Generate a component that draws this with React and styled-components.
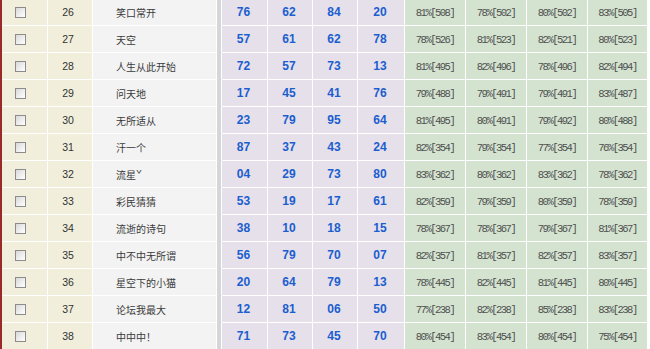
import React from "react";
import styled, { createGlobalStyle } from "styled-components";

const GlobalStyle = createGlobalStyle`
  html, body {
    margin: 0;
    padding: 0;
    background: #ffffff;
    overflow: hidden;
  }
`;

const rows = [
  [26, "笑口常开", ["76", "62", "84", "20"], ["81%[508]", "78%[502]", "80%[502]", "83%[505]"]],
  [27, "天空", ["57", "61", "62", "78"], ["78%[526]", "81%[523]", "82%[521]", "80%[523]"]],
  [28, "人生从此开始", ["72", "57", "73", "13"], ["81%[495]", "82%[496]", "78%[496]", "82%[494]"]],
  [29, "问天地", ["17", "45", "41", "76"], ["79%[488]", "79%[491]", "79%[491]", "83%[487]"]],
  [30, "无所适从", ["23", "79", "95", "64"], ["81%[495]", "80%[491]", "79%[492]", "80%[488]"]],
  [31, "汗一个", ["87", "37", "43", "24"], ["82%[354]", "79%[354]", "77%[354]", "76%[354]"]],
  [32, "流星ˇ", ["04", "29", "73", "80"], ["83%[362]", "80%[362]", "83%[362]", "78%[362]"]],
  [33, "彩民猜猜", ["53", "19", "17", "61"], ["82%[359]", "79%[359]", "80%[359]", "78%[359]"]],
  [34, "流逝的诗句", ["38", "10", "18", "15"], ["78%[367]", "78%[367]", "79%[367]", "81%[367]"]],
  [35, "中不中无所谓", ["56", "79", "70", "07"], ["82%[357]", "81%[357]", "82%[357]", "83%[357]"]],
  [36, "星空下的小猫", ["20", "64", "79", "13"], ["78%[445]", "82%[445]", "81%[445]", "80%[445]"]],
  [37, "论坛我最大", ["12", "81", "06", "50"], ["77%[238]", "82%[238]", "85%[238]", "83%[238]"]],
  [38, "中中中！", ["71", "73", "45", "70"], ["80%[454]", "83%[454]", "80%[454]", "75%[454]"]],
];

const Board = styled.div`
  width: 650px;
  height: 349px;
  overflow: hidden;
  box-sizing: border-box;
  border-left: 2px solid #9a2a2a;
`;

const Rows = styled.div`
  margin-top: -1px;
`;

const Row = styled.div`
  display: grid;
  grid-template-columns: 46px 45px 124px 5px 46px 45px 45px 47px 61px 61px 61px 60px;
  height: 27px;
`;

const Cell = styled.div`
  box-sizing: border-box;
  border-right: 1px solid #ffffff;
  border-bottom: 1px solid #ffffff;
  display: flex;
  align-items: center;
  justify-content: ${(p) => p.$align || "center"};
  background: ${(p) => p.$bg};
  white-space: nowrap;
`;

const CheckCell = styled(Cell)`
  padding-left: 13px;
`;

const Check = styled.input.attrs({ type: "checkbox" })`
  appearance: none;
  margin: 0;
  width: 11px;
  height: 11px;
  box-sizing: border-box;
  border: 1px solid #8c8c8c;
  background: linear-gradient(135deg, #d9d9d9 0%, #f4f4f4 70%, #ffffff 100%);
`;

const Num = styled(Cell)`
  font-family: "Liberation Sans", Arial, sans-serif;
  font-size: 10.5px;
  color: #333333;
  padding-right: 4px;
`;

const Name = styled(Cell)`
  font-family: "Noto Sans CJK SC", "Liberation Sans", sans-serif;
  font-size: 10px;
  color: #3a3a3a;
  padding-left: 23px;
  padding-top: 1px;
`;

const Divider = styled.div`
  background: #d6d6d6;
  border-right: 1px solid #ffffff;
  border-bottom: 1px solid #d6d6d6;
  box-sizing: border-box;
`;

const Ball = styled(Cell)`
  font-family: "Liberation Sans", Arial, sans-serif;
  font-weight: bold;
  font-size: 12px;
  color: #1a5ecf;
  padding-right: 2px;
`;

const Rate = styled(Cell)`
  font-family: "Liberation Mono", monospace;
  font-size: 10.5px;
  letter-spacing: -1.5px;
  color: #4f4f4f;
  padding-top: 1px;
`;

export default function App() {
  return (
    <>
      <GlobalStyle />
      <Board>
        <Rows>
          {rows.map(([id, name, balls, rates]) => (
            <Row key={id}>
              <CheckCell $bg="#f1efdc" $align="flex-start">
                <Check />
              </CheckCell>
              <Num $bg="#f1efdc">{id}</Num>
              <Name $bg="#f3f3f3" $align="flex-start">
                {name}
              </Name>
              <Divider />
              {balls.map((b, i) => (
                <Ball key={i} $bg="#e6e0ea">
                  {b}
                </Ball>
              ))}
              {rates.map((r, i) => (
                <Rate key={i} $bg="#d3e3d0">
                  {r}
                </Rate>
              ))}
            </Row>
          ))}
        </Rows>
      </Board>
    </>
  );
}
